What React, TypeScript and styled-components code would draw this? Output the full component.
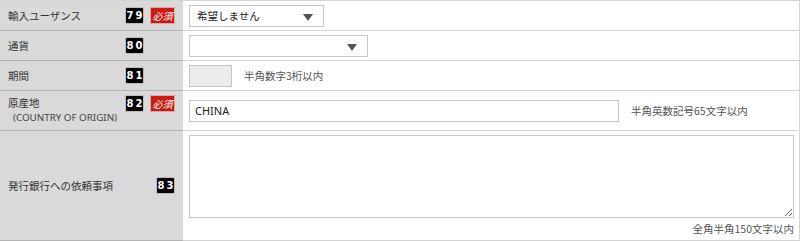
import styled, { createGlobalStyle } from "styled-components";

const GlobalStyle = createGlobalStyle`
  html, body {
    margin: 0;
    padding: 0;
    background: #ffffff;
  }
  body {
    font-family: "Noto Sans CJK JP", "Noto Sans", sans-serif;
    color: #333333;
  }
`;

const Table = styled.div`
  width: 800px;
  border-top: 1px solid #d4d4d4;
  box-sizing: border-box;
`;

const Row = styled.div<{ $h: number }>`
  display: flex;
  height: ${(p) => p.$h}px;
`;

const Label = styled.div<{ $top?: boolean }>`
  width: 183px;
  flex-shrink: 0;
  box-sizing: border-box;
  background: #d9d9d9;
  border-bottom: 1px solid #b4b4b4;
  padding: ${(p) => (p.$top ? "4px 6px 0 8px" : "0 6px 0 8px")};
  display: flex;
  align-items: ${(p) => (p.$top ? "flex-start" : "center")};
  gap: 6px;
`;

const LabelText = styled.div`
  flex: 1;
  font-size: 10.5px;
  line-height: 15px;
  color: #333;
`;

const SubText = styled.div`
  font-family: "Noto Sans", sans-serif;
  font-size: 9.8px;
  line-height: 15px;
  padding-left: 5px;
  color: #444;
`;

const Badges = styled.div<{ $wide: boolean }>`
  display: flex;
  gap: 6px;
  width: ${(p) => (p.$wide ? "52px" : "21px")};
  flex-shrink: 0;
`;

const Num = styled.span`
  display: inline-flex;
  align-items: center;
  justify-content: center;
  width: 19px;
  height: 17px;
  box-sizing: border-box;
  background: #000;
  color: #fff;
  border: 1px solid #bbb;
  border-radius: 2px;
  font-family: "DejaVu Sans", sans-serif;
  font-weight: bold;
  font-size: 10px;
  letter-spacing: 2px;
  padding-left: 2px;
`;

const Required = styled.span`
  display: inline-flex;
  align-items: center;
  justify-content: center;
  width: 25px;
  height: 17px;
  box-sizing: border-box;
  background: #cc1a10;
  color: #fff;
  border: 1px solid #d8a8a8;
  font-size: 10px;
  font-style: italic;
`;

const Value = styled.div<{ $column?: boolean }>`
  flex: 1;
  box-sizing: border-box;
  border-bottom: 1px solid #d4d4d4;
  border-right: 1px solid #d4d4d4;
  padding: ${(p) => (p.$column ? "4px 5px 0 6px" : "0 6px")};
  display: flex;
  flex-direction: ${(p) => (p.$column ? "column" : "row")};
  align-items: ${(p) => (p.$column ? "stretch" : "center")};
  gap: ${(p) => (p.$column ? "0" : "12px")};
`;

const SelectBox = styled.div<{ $w: number }>`
  position: relative;
  width: ${(p) => p.$w}px;
  height: 22px;
  box-sizing: border-box;
  border: 1px solid #c8c8c8;
  background: #fff;
  font-size: 10.5px;
  line-height: 20px;
  padding-left: 7px;
  color: #222;
`;

const Arrow = styled.span`
  position: absolute;
  right: 10px;
  top: 8px;
  width: 0;
  height: 0;
  border-left: 5px solid transparent;
  border-right: 5px solid transparent;
  border-top: 7px solid #555;
`;

const TextInput = styled.input<{ $w: number; $disabled?: boolean }>`
  width: ${(p) => p.$w}px;
  height: 22px;
  box-sizing: border-box;
  border: 1px solid #c8c8c8;
  background: ${(p) => (p.$disabled ? "#ececec" : "#fff")};
  font-family: "Noto Sans", sans-serif;
  font-size: 11px;
  color: #222;
  padding: 0 5px;
  margin: 0;
  outline: none;
`;

const Hint = styled.span`
  font-size: 10.5px;
  color: #555;
`;

const Area = styled.textarea`
  width: 100%;
  height: 83px;
  flex-shrink: 0;
  box-sizing: border-box;
  border: 1px solid #c8c8c8;
  margin: 0;
  resize: both;
  outline: none;
`;

const AreaHint = styled.div`
  text-align: right;
  font-size: 10.5px;
  line-height: 15px;
  color: #555;
  margin-top: 3px;
`;

export default function App() {
  return (
    <>
      <GlobalStyle />
      <Table>
        <Row $h={30}>
          <Label>
            <LabelText>輸入ユーザンス</LabelText>
            <Badges $wide>
              <Num>79</Num>
              <Required>必須</Required>
            </Badges>
          </Label>
          <Value>
            <SelectBox $w={135}>
              希望しません
              <Arrow />
            </SelectBox>
          </Value>
        </Row>
        <Row $h={30}>
          <Label>
            <LabelText>通貨</LabelText>
            <Badges $wide>
              <Num>80</Num>
            </Badges>
          </Label>
          <Value>
            <SelectBox $w={179}>
              <Arrow />
            </SelectBox>
          </Value>
        </Row>
        <Row $h={30}>
          <Label>
            <LabelText>期間</LabelText>
            <Badges $wide>
              <Num>81</Num>
            </Badges>
          </Label>
          <Value>
            <TextInput $w={43} $disabled readOnly />
            <Hint>半角数字3桁以内</Hint>
          </Value>
        </Row>
        <Row $h={40}>
          <Label $top>
            <LabelText>
              原産地
              <SubText>(COUNTRY OF ORIGIN)</SubText>
            </LabelText>
            <Badges $wide>
              <Num>82</Num>
              <Required>必須</Required>
            </Badges>
          </Label>
          <Value>
            <TextInput $w={430} defaultValue="CHINA" />
            <Hint>半角英数記号65文字以内</Hint>
          </Value>
        </Row>
        <Row $h={110}>
          <Label>
            <LabelText>発行銀行への依頼事項</LabelText>
            <Badges $wide={false}>
              <Num>83</Num>
            </Badges>
          </Label>
          <Value $column>
            <Area />
            <AreaHint>全角半角150文字以内</AreaHint>
          </Value>
        </Row>
      </Table>
    </>
  );
}
